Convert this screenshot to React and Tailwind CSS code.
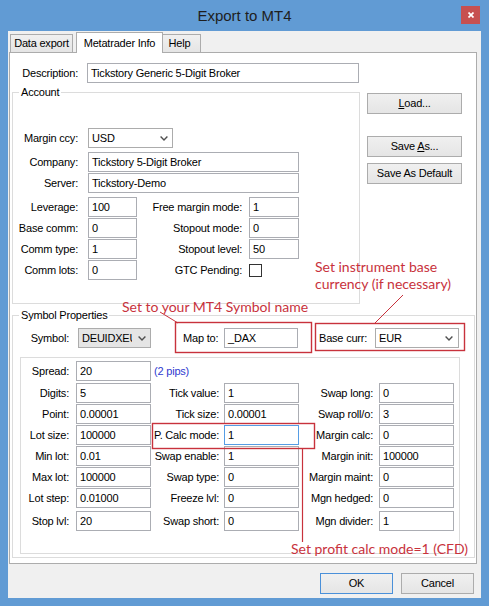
import React from "react";

const Chevron = () => (
  <svg width="8" height="5" viewBox="0 0 8 5" className="flex-none">
    <path d="M0.6 0.6 L4 4 L7.4 0.6" stroke="#505050" strokeWidth="1.4" fill="none" />
  </svg>
);

const Input = ({ cls = "", value, focus }) => (
  <div
    className={`h-[20px] border ${focus ? "border-[#569de5]" : "border-[#abadb3]"} bg-white pl-[3px] flex items-center whitespace-nowrap overflow-hidden flex-none ${cls}`}
  >
    {value}
  </div>
);

const Combo = ({ cls = "", value, gray, textCls = "flex-1" }) => (
  <div
    className={`h-[20px] border border-[#acacac] ${gray ? "bg-[#e5e5e5]" : "bg-white"} flex items-center pl-[3px] pr-[4px] flex-none ${cls}`}
  >
    <div className={`overflow-hidden whitespace-nowrap ${textCls}`}>{value}</div>
    <div className="ml-auto flex items-center">
      <Chevron />
    </div>
  </div>
);

const Label = ({ cls = "", children }) => (
  <div className={`text-right whitespace-nowrap flex-none ${cls}`}>{children}</div>
);

const Btn = ({ cls = "", children, def }) => (
  <div
    className={`h-[21px] border ${def ? "border-[#4a90d9]" : "border-[#acacac]"} bg-linear-to-b from-[#f0f0f0] to-[#e5e5e5] flex items-center justify-center flex-none ${cls}`}
  >
    <span className="whitespace-pre">{children}</span>
  </div>
);

const rows = [
  { mt: "", l1: "Spread:", v1: "20", pips: true },
  { mt: "mt-[2px]", l1: "Digits:", v1: "5", l2: "Tick value:", v2: "1", l3: "Swap long:", v3: "0" },
  { mt: "mt-[1px]", l1: "Point:", v1: "0.00001", l2: "Tick size:", v2: "0.00001", l3: "Swap roll/o:", v3: "3" },
  { mt: "mt-[1px]", l1: "Lot size:", v1: "100000", l2: "P. Calc mode:", v2: "1", focus: true, l3: "Margin calc:", v3: "0" },
  { mt: "mt-[1px]", l1: "Min lot:", v1: "0.01", l2: "Swap enable:", v2: "1", l3: "Margin init:", v3: "100000" },
  { mt: "mt-[1px]", l1: "Max lot:", v1: "100000", l2: "Swap type:", v2: "0", l3: "Margin maint:", v3: "0" },
  { mt: "mt-[1px]", l1: "Lot step:", v1: "0.01000", l2: "Freeze lvl:", v2: "0", l3: "Mgn hedged:", v3: "0" },
  { mt: "mt-[3px]", l1: "Stop lvl:", v1: "20", l2: "Swap short:", v2: "0", l3: "Mgn divider:", v3: "1" },
];

export default function App() {
  return (
    <div className="relative w-[489px] h-[606px] bg-[#619bd4] flex flex-col font-['Liberation_Sans',Arial,sans-serif] text-[11px] tracking-[-0.2px] text-black leading-[13px] overflow-hidden">
      {/* Title bar */}
      <div className="relative h-[31px] flex items-center justify-center flex-none">
        <div className="text-[15px] tracking-normal text-[#1e1e1e] leading-[18px]">Export to MT4</div>
        <div className="absolute right-[9px] top-[6px] w-[19px] h-[18px] bg-[#c75050] flex items-center justify-center">
          <svg width="6" height="6" viewBox="0 0 6 6">
            <path d="M0.5 0.5 L5.5 5.5 M5.5 0.5 L0.5 5.5" stroke="#ffffff" strokeWidth="1.7" />
          </svg>
        </div>
      </div>

      {/* Client area */}
      <div className="mx-[8px] h-[567px] bg-[#f0f0f0] flex flex-col flex-none">
        {/* Tabs */}
        <div className="h-[21px] flex items-end pl-[2px] flex-none">
          <div className="w-[63px] h-[18px] border border-b-0 border-[#acacac] bg-linear-to-b from-[#f0f0f0] to-[#e5e5e5] flex items-center justify-center">
            Data export
          </div>
          <div className="relative z-10 ml-[3px] w-[87px] h-[21px] -mb-[1px] border border-b-0 border-[#acacac] bg-white flex items-start justify-center pt-[4px]">
            Metatrader Info
          </div>
          <div className="ml-[-1px] w-[39px] h-[18px] border border-b-0 border-[#acacac] bg-linear-to-b from-[#f0f0f0] to-[#e5e5e5] flex items-center justify-center pr-[4px]">
            Help
          </div>
        </div>

        {/* Tab panel */}
        <div className="ml-[1px] w-[468px] h-[512px] bg-white border border-[#acacac] flex flex-col flex-none">
          {/* Description */}
          <div className="mt-[10px] flex items-center">
            <Label cls="w-[68px]">Description:</Label>
            <Input cls="ml-[9px] w-[272px]" value="Tickstory Generic 5-Digit Broker" />
          </div>

          {/* Account + buttons */}
          <div className="mt-[2px] flex items-start">
            <fieldset className="ml-[2px] w-[348px] h-[219px] border border-[#dcdcdc] flex-none">
              <legend className="ml-[6px] px-[2px] leading-[14px]">Account</legend>
              <div className="flex flex-col">
                <div className="mt-[29px] flex items-center">
                  <Label cls="w-[65px]">Margin ccy:</Label>
                  <Combo cls="ml-[10px] w-[85px]" value="USD" />
                </div>
                <div className="mt-[4px] flex items-center">
                  <Label cls="w-[65px]">Company:</Label>
                  <Input cls="ml-[10px] w-[211px]" value="Tickstory 5-Digit Broker" />
                </div>
                <div className="mt-[1px] flex items-center">
                  <Label cls="w-[65px]">Server:</Label>
                  <Input cls="ml-[10px] w-[211px]" value="Tickstory-Demo" />
                </div>
                <div className="mt-[4px] flex items-center">
                  <Label cls="w-[65px]">Leverage:</Label>
                  <Input cls="ml-[10px] w-[49px]" value="100" />
                  <Label cls="w-[105px]">Free margin mode:</Label>
                  <Input cls="ml-[7px] w-[50px]" value="1" />
                </div>
                <div className="mt-[1px] flex items-center">
                  <Label cls="w-[65px]">Base comm:</Label>
                  <Input cls="ml-[10px] w-[49px]" value="0" />
                  <Label cls="w-[105px]">Stopout mode:</Label>
                  <Input cls="ml-[7px] w-[50px]" value="0" />
                </div>
                <div className="mt-[1px] flex items-center">
                  <Label cls="w-[65px]">Comm type:</Label>
                  <Input cls="ml-[10px] w-[49px]" value="1" />
                  <Label cls="w-[105px]">Stopout level:</Label>
                  <Input cls="ml-[7px] w-[50px]" value="50" />
                </div>
                <div className="mt-[1px] flex items-center">
                  <Label cls="w-[65px]">Comm lots:</Label>
                  <Input cls="ml-[10px] w-[49px]" value="0" />
                  <Label cls="w-[105px]">GTC Pending:</Label>
                  <div className="ml-[7px] w-[13px] h-[13px] border border-[#333333] bg-white flex-none" />
                </div>
              </div>
            </fieldset>
            <div className="ml-[7px] mt-[8px] flex flex-col">
              <Btn cls="w-[95px]">
                <span className="underline">L</span>oad...
              </Btn>
              <Btn cls="w-[95px] mt-[22px]">
                {"Save "}
                <span className="underline">A</span>s...
              </Btn>
              <Btn cls="w-[95px] mt-[6px]">Save As Default</Btn>
            </div>
          </div>

          {/* Symbol Properties */}
          <fieldset className="mt-[4px] ml-[2px] w-[463px] h-[250px] border border-[#dcdcdc] flex-none">
            <legend className="ml-[6px] px-[2px] leading-[14px]">Symbol Properties</legend>
            <div className="flex flex-col">
              <div className="mt-[6px] flex items-center">
                <Label cls="w-[56px]">Symbol:</Label>
                <Combo cls="ml-[9px] w-[73px]" value="DEUIDXEUR" gray textCls="w-[50px] flex-none" />
                <div className="ml-[32px] w-[41px] flex-none whitespace-nowrap">Map to:</div>
                <Input cls="w-[74px]" value="_DAX" />
                <div className="ml-[21px] w-[56px] flex-none whitespace-nowrap">Base curr:</div>
                <Combo cls="w-[84px] pr-[5px]" value="EUR" />
              </div>
              <div className="ml-[7px] mt-[9px] w-[440px] h-[197px] border border-[#dcdcdc] pt-[3px] flex flex-col">
                {rows.map((r, i) => (
                  <div key={i} className={`flex items-center h-[20px] ${r.mt}`}>
                    <Label cls="w-[48px]">{r.l1}</Label>
                    <Input cls="ml-[7px] w-[75px]" value={r.v1} />
                    {r.pips ? (
                      <div className="ml-[3px] text-[#2f3bcf] whitespace-nowrap">(2 pips)</div>
                    ) : (
                      <>
                        <Label cls="w-[68px]">{r.l2}</Label>
                        <Input cls="ml-[5px] w-[75px]" value={r.v2} focus={r.focus} />
                        <Label cls="w-[74px]">{r.l3}</Label>
                        <Input cls="ml-[6px] w-[75px]" value={r.v3} />
                      </>
                    )}
                  </div>
                ))}
              </div>
            </div>
          </fieldset>
        </div>

        {/* Dialog buttons */}
        <div className="mt-[9px] flex justify-end gap-[8px] pr-[7px]">
          <Btn cls="w-[73px]" def>
            OK
          </Btn>
          <Btn cls="w-[73px]">Cancel</Btn>
        </div>
      </div>

      {/* Annotations overlay */}
      <svg className="absolute left-0 top-0 pointer-events-none" width="489" height="606">
        <g stroke="#c8323c" strokeWidth="1.4" fill="none">
          <rect x="175.5" y="322.5" width="136" height="30" />
          <rect x="315.5" y="323.5" width="149" height="27" />
          <rect x="152.5" y="423.5" width="162" height="25" />
          <line x1="160" y1="312" x2="178" y2="323" strokeWidth="1" />
          <line x1="403" y1="295" x2="375" y2="323" strokeWidth="1" />
          <line x1="302.5" y1="449" x2="302.5" y2="542" strokeWidth="1.2" />
        </g>
      </svg>
      <div className="absolute left-[122px] top-[298px] font-['Lato',sans-serif] text-[14px] leading-[17px] tracking-normal text-[#c8323c] whitespace-nowrap pointer-events-none">
        Set to your MT4 Symbol name
      </div>
      <div className="absolute left-[315px] top-[258px] font-['Lato',sans-serif] text-[14px] leading-[17px] tracking-normal text-[#c8323c] whitespace-nowrap pointer-events-none">
        Set instrument base
        <br />
        currency (if necessary)
      </div>
      <div className="absolute left-[291px] top-[540px] font-['Lato',sans-serif] text-[14px] leading-[17px] tracking-normal text-[#c8323c] whitespace-nowrap pointer-events-none">
        Set profit calc mode=1 (CFD)
      </div>
    </div>
  );
}
